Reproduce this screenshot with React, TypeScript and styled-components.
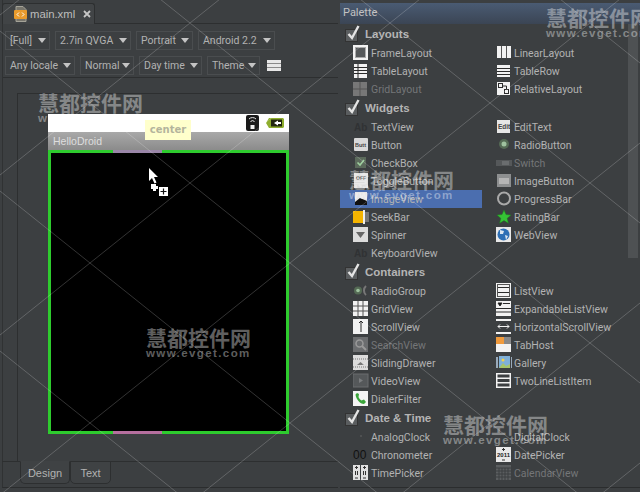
import React from "react";
import styled, { createGlobalStyle } from "styled-components";

const Global = createGlobalStyle`
  html, body { margin: 0; padding: 0; background: #3c3f41; }
  #root { width: 640px; height: 492px; overflow: hidden; }
`;

const Page = styled.div`
  position: relative;
  width: 640px;
  height: 492px;
  display: flex;
  overflow: hidden;
  background: #3c3f41;
  color: #b2b2b2;
  font-family: Roboto, "Liberation Sans", Arial, sans-serif;
  font-size: 10.5px;
`;

const Left = styled.div`
  width: 336px;
  height: 488px;
  margin-left: 2px;
  display: flex;
  flex-direction: column;
  border-left: 1px solid #303233;
  border-bottom: 1px solid #2b2d2e;
  box-sizing: border-box;
`;

const TabStrip = styled.div`
  height: 24px;
  flex: none;
  margin-left: -1px;
  padding-top: 3px;
  box-sizing: border-box;
  border-bottom: 1px solid #2d2f30;
  display: flex;
`;

const FileTab = styled.div`
  width: 93px;
  height: 21px;
  box-sizing: border-box;
  border: 1px solid #2d2f30;
  border-bottom: none;
  border-radius: 3px 3px 0 0;
  background: #414446;
  display: flex;
  align-items: center;
  padding-left: 11px;
  gap: 2px;
  font-family: "Liberation Sans", Arial, sans-serif;
  font-size: 11.3px;
  color: #bdbdbd;
`;

const IconBox = styled.svg`
  flex: none;
`;

const CloseIcon = styled.svg`
  margin-left: 6px;
  flex: none;
`;

const Toolbar = styled.div`
  height: 54px;
  flex: none;
  box-sizing: border-box;
  padding: 7px 2px 0 2px;
  border-bottom: 1px solid #2d2f30;
  display: flex;
  flex-direction: column;
  gap: 6px;
`;

const ToolRow = styled.div`
  display: flex;
  gap: 5px;
  align-items: center;
  height: 19px;
`;

const Combo = styled.div<{ $w: number }>`
  width: ${(p) => p.$w}px;
  height: 19px;
  box-sizing: border-box;
  border: 1px solid #4a4d4f;
  display: flex;
  align-items: center;
  justify-content: space-between;
  padding: 0 3px 0 4px;
  white-space: nowrap;
`;

const Arrow = styled.span`
  width: 0;
  height: 0;
  border-left: 4.5px solid transparent;
  border-right: 4.5px solid transparent;
  border-top: 5px solid #c4c4c4;
`;

const Stripes = styled.div`
  width: 14px;
  height: 11px;
  margin-left: 2px;
  background: repeating-linear-gradient(to bottom, #e8e8e8 0 3px, #8a8a8a 3px 4px);
`;

const Editor = styled.div`
  flex: 1;
  min-height: 0;
  padding: 15px 0 0 14px;
  display: flex;
`;

const Canvas = styled.div`
  flex: 1;
  border-left: 1px solid #2d2f30;
  border-top: 1px solid #2d2f30;
  padding: 20px 0 0 30px;
`;

const Phone = styled.div`
  width: 241px;
  display: flex;
  flex-direction: column;
`;

const StatusBar = styled.div`
  height: 18px;
  background: #ffffff;
  display: flex;
  align-items: center;
  justify-content: flex-end;
  gap: 6px;
  padding-right: 5px;
`;

const TitleBar = styled.div`
  height: 18px;
  background: linear-gradient(#a9a9a9, #8b8b8b);
  color: #dedede;
  font-family: "Liberation Sans", Arial, sans-serif;
  font-size: 10.5px;
  padding-left: 5px;
  line-height: 18px;
`;

const Screen = styled.div`
  position: relative;
  height: 284px;
  box-sizing: border-box;
  background: #000;
  border: 3px solid #2ecb2e;
`;

const EdgeMark = styled.div<{ $edge: "top" | "bottom"; $c: string }>`
  position: absolute;
  left: 62px;
  width: 49px;
  height: 3px;
  ${(p) => p.$edge}: -3px;
  background: ${(p) => p.$c};
`;

const Tip = styled.div`
  position: absolute;
  left: 145px;
  top: 120px;
  width: 46px;
  height: 20px;
  background: #ffffcc;
  color: #b4b49c;
  font-weight: bold;
  font-family: "DejaVu Sans", sans-serif;
  font-size: 10px;
  line-height: 20px;
  text-align: center;
`;

const CursorWrap = styled.div`
  position: absolute;
  left: 148px;
  top: 167px;
  width: 22px;
  height: 30px;
`;

const BottomTabs = styled.div`
  height: 25px;
  flex: none;
  margin-left: -1px;
  border-top: 1px solid #2d2f30;
  padding-left: 18px;
  display: flex;
`;

const ViewTab = styled.div<{ $active?: boolean; $w: number }>`
  width: ${(p) => p.$w}px;
  height: 23px;
  box-sizing: border-box;
  margin-top: -1px;
  border: 1px solid #2d2f30;
  border-top: ${(p) => (p.$active ? "1px solid #3f4244" : "1px solid #2d2f30")};
  border-radius: 0 0 5px 5px;
  background: #3f4244;
  font-family: "Liberation Sans", Arial, sans-serif;
  font-size: 11px;
  display: flex;
  align-items: center;
  justify-content: center;
`;

const Right = styled.div`
  margin-left: 2px;
  width: 300px;
  height: 488px;
  box-sizing: border-box;
  display: flex;
  flex-direction: column;
  border-bottom: 1px solid #2b2d2e;
  overflow: hidden;
`;

const PaletteHead = styled.div`
  flex: none;
  box-sizing: border-box;
  margin-top: 3px;
  height: 21px;
  padding-left: 3px;
  line-height: 20px;
  font-size: 11px;
  background: linear-gradient(#4a5b73, #3b4554);
  color: #c2c2c2;
`;

const PaletteBody = styled.div`
  flex: 1;
  min-height: 0;
  display: flex;
`;

const List = styled.div`
  flex: 1;
  min-width: 0;
  overflow: hidden;
`;

const SectionHead = styled.div`
  height: 20px;
  display: flex;
  align-items: center;
  padding-left: 5px;
  gap: 7px;
  font-family: "Liberation Sans", Arial, sans-serif;
  font-weight: bold;
  font-size: 11.5px;
  color: #b4b4b4;
`;

const Check = styled.div`
  position: relative;
  width: 13px;
  height: 13px;
  margin-top: 2px;
  background: #5a5d5f;
  border: 1px solid #333;
  box-sizing: border-box;
`;

const CheckMark = styled.svg`
  position: absolute;
  left: 0;
  top: -6px;
`;

const Grid = styled.div`
  display: grid;
  grid-template-columns: 142px 1fr;
  column-gap: 14px;
`;

const Item = styled.div<{ $sel?: boolean; $off?: boolean; $col: number; $row: number }>`
  grid-column: ${(p) => p.$col};
  grid-row: ${(p) => p.$row};
  height: 18px;
  display: flex;
  align-items: center;
  gap: 2px;
  padding-left: ${(p) => (p.$col === 1 ? 13 : 0)}px;
  background: ${(p) => (p.$sel ? "#4b6eaf" : "transparent")};
  color: ${(p) => (p.$off ? "#747678" : "#b2b2b2")};
  white-space: nowrap;
`;

const Track = styled.div`
  width: 10px;
  flex: none;
  margin-right: 2px;
`;

const Thumb = styled.div`
  height: 234px;
  background: #4e5153;
`;

const Overlay = styled.svg`
  position: absolute;
  inset: 0;
  pointer-events: none;
`;

const Mark = styled.div<{ $x: number; $y: number }>`
  position: absolute;
  left: ${(p) => p.$x}px;
  top: ${(p) => p.$y}px;
  color: rgba(255, 255, 255, 0.38);
  font-weight: bold;
  pointer-events: none;
  white-space: nowrap;
`;

const MarkCn = styled.div`
  font-family: "Noto Sans CJK SC", sans-serif;
  font-size: 21px;
  line-height: 21px;
`;

const MarkEn = styled.div`
  font-family: "Liberation Sans", sans-serif;
  font-size: 11.5px;
  line-height: 10px;
  letter-spacing: 1.4px;
`;

const S = ({ children }: { children: React.ReactNode }) => (
  <IconBox width="16" height="16" viewBox="0 0 16 16">{children}</IconBox>
);

const W = "#f2f2f2";
const D = "#2b2b2b";

const icons: Record<string, React.ReactNode> = {
  frame: <><rect x="0" y="0" width="15" height="15" fill={W} /><rect x="2.5" y="2.5" width="10" height="10" fill="#55585a" stroke="#aaa" /></>,
  linear: <><rect x="1" y="1" width="14" height="12" fill={W} /><path d="M5.5 1v12M10.5 1v12" stroke="#555" /></>,
  table: <><rect x="1" y="1" width="13" height="14" fill={W} /><path d="M1 4.5h13M1 7.5h13M1 10.5h13M5 1v14" stroke={D} /></>,
  row: <><rect x="1" y="2" width="13" height="12" fill={W} /><path d="M1 5.5h13M1 8.5h13M1 11.5h13" stroke={D} /></>,
  grid: <><rect x="0" y="1" width="14" height="14" fill="#777" /><path d="M7 1v14M0 8h14" stroke="#555" /></>,
  relative: <><rect x="1" y="1" width="13" height="13" fill={W} /><rect x="2.5" y="2.5" width="4" height="4" fill="none" stroke={D} /><rect x="8.5" y="8.5" width="4" height="4" fill="none" stroke={D} /><path d="M6.5 5h4v3" fill="none" stroke={D} /></>,
  ab: <text x="1" y="12" fontSize="10" fontWeight="bold" fill="#303234" fontFamily="Liberation Sans">Ab</text>,
  edit: <><rect x="1" y="1" width="13" height="13" fill="#e6e6e6" /><text x="2" y="10" fontSize="6.5" fontWeight="bold" fill="#444" fontFamily="Liberation Sans">Edit</text></>,
  button: <><rect x="1" y="1" width="14" height="13" rx="1" fill="#d9d9d9" /><text x="2" y="10" fontSize="5.5" fontWeight="bold" fill="#444" fontFamily="Liberation Sans">Butt</text></>,
  radio: <><circle cx="8" cy="7" r="5" fill="#556b55" /><circle cx="8" cy="7" r="2.5" fill="#9fc29f" /></>,
  check: <><rect x="2" y="2" width="11" height="11" fill="#5b6a5b" /><path d="M4.5 7.5l2.5 2.5 4-5" fill="none" stroke="#9fd19f" strokeWidth="1.6" /></>,
  sw: <><rect x="0" y="5" width="16" height="6" fill="#55585a" /><rect x="6" y="6" width="7" height="4" fill="#6a6d6f" /></>,
  toggle: <><rect x="1" y="0" width="14" height="15" fill="#dcdcdc" /><text x="3" y="7" fontSize="5" fontWeight="bold" fill="#444" fontFamily="Liberation Sans">OFF</text></>,
  imgbtn: <><rect x="1" y="1" width="14" height="13" fill="#8d8f90" /><rect x="3" y="5" width="10" height="6" fill="#b5b5b5" /></>,
  image: <><rect x="2" y="1" width="12" height="13" fill="#e6e6e6" /><path d="M2 11l5-4 7 3v4H2z" fill="#111" /></>,
  progress: <circle cx="8" cy="7.5" r="6" fill="none" stroke="#a9a9a9" strokeWidth="2" />,
  seek: <><rect x="0" y="2" width="10" height="12" fill="#f5b400" /><rect x="10" y="1" width="2" height="14" fill="#eee" /><rect x="12" y="3" width="4" height="10" fill="#777" /></>,
  rating: <path d="M8 1l2 4.6 5 .5-3.8 3.2 1.2 5L8 11.6l-4.4 2.7 1.2-5L1 6.1l5-.5z" fill="#35c335" stroke="#1c7d1c" strokeWidth=".5" />,
  spinner: <><rect x="0" y="0" width="15" height="15" fill="#dcdcdc" /><path d="M3 5h9l-4.5 6z" fill="#666" /></>,
  web: <><rect x="0" y="0" width="15" height="15" fill="#e8e8e8" /><circle cx="7.5" cy="7.5" r="6" fill="#2d6fb5" /><path d="M4 3l4 1-1 3-3 0zM9 8l3 1-2 4z" fill="#dbe6f0" /></>,
  group: <><circle cx="5" cy="7.5" r="4" fill="#556b55" /><circle cx="5" cy="7.5" r="1.8" fill="#9fc29f" /><path d="M13 3a6 6 0 0 0 0 9" fill="none" stroke="#777" strokeWidth="2" /></>,
  list: <><rect x="0" y="0" width="15" height="15" fill={W} /><path d="M1 4.5h13M1 9.5h13" stroke={D} /><rect x="1.5" y="1.5" width="12" height="12" fill="none" stroke="#555" /></>,
  gridv: <><rect x="0" y="0" width="15" height="15" fill={W} /><path d="M5 0v15M10 0v15M0 5h15M0 10h15" stroke="#555" /></>,
  exp: <><rect x="0" y="0" width="15" height="15" fill={W} /><path d="M2 2h4l-2 3zM7 2.5h7M0 7.5h15M0 11h15" stroke={D} /></>,
  scroll: <><rect x="0" y="0" width="15" height="15" fill={W} /><path d="M8 13V2M6 4l2-2 2 2" fill="none" stroke={D} /></>,
  hscroll: <><rect x="0" y="0" width="15" height="15" fill="#3c3f41" /><rect x="0" y="0" width="15" height="2" fill={W} /><rect x="0" y="13" width="15" height="2" fill={W} /><path d="M2 7.5h11M4 5.5l-2 2 2 2M11 5.5l2 2-2 2" fill="none" stroke={W} /></>,
  search: <><rect x="0" y="0" width="15" height="15" fill="#6b6d6f" /><circle cx="6.5" cy="6.5" r="3.5" fill="none" stroke="#999" strokeWidth="1.5" /><path d="M9 9l4 4" stroke="#999" strokeWidth="2" /></>,
  tab: <><rect x="0" y="0" width="15" height="15" fill={W} /><rect x="0" y="0" width="8" height="7" fill="#f09a3c" /><rect x="8" y="0" width="7" height="7" fill="#888" /></>,
  drawer: <><rect x="0" y="0" width="15" height="15" fill="#dcdcdc" /><path d="M0 4h15M0 12h15" stroke="#777" strokeDasharray="1 1" /><path d="M4 10l3.5-3 3.5 3z" fill="#777" /></>,
  gallery: <><rect x="0" y="2" width="2" height="11" fill="#9ab" /><rect x="3" y="1" width="11" height="12" fill="#7fb0d8" /><path d="M3 13l4-5 3 3 4-2v4z" fill="#a6c46a" /><circle cx="7" cy="5" r="1.5" fill="#f2d24c" /><rect x="15" y="2" width="1" height="11" fill="#9ab" /></>,
  video: <><rect x="0" y="1" width="15" height="13" fill="#55585a" stroke="#6b6d6f" /><path d="M6 5l4 2.5L6 10z" fill="#7b7d7f" /></>,
  two: <><rect x="0" y="0" width="15" height="15" fill={W} /><rect x="1.5" y="1.5" width="12" height="3" fill="#3c3f41" /><rect x="1.5" y="6" width="12" height="3" fill="#3c3f41" /><rect x="1.5" y="10.5" width="12" height="3" fill="#3c3f41" /></>,
  dialer: <><rect x="0" y="0" width="15" height="15" fill="#f4f4f4" /><path d="M4 2l2 1-.5 3c.6 1.5 1.5 2.5 3 3.5l2.5-1 2 2.5-2 2c-4 0-8-5-8.5-9.5z" fill="#3aa53a" /></>,
  analog: <circle cx="8" cy="7" r=".8" fill="#666" />,
  digital: <></>,
  chrono: <text x="0" y="12" fontSize="12" fill="#111" fontFamily="Liberation Sans">00</text>,
  date: <><rect x="0" y="0" width="15" height="15" fill="#e8e8e8" /><text x="1" y="10" fontSize="6" fontWeight="bold" fill="#222" fontFamily="Liberation Sans">2011</text><path d="M7.5 1v3M6 2.5h3M6 13h3" stroke="#333" /></>,
  time: <><rect x="0" y="0" width="7" height="15" fill="#e0e0e0" /><rect x="8" y="0" width="7" height="15" fill="#e0e0e0" /><path d="M3.5 1v3M2 2.5h3M11.5 1v3M10 2.5h3M2 13h3M10 13h3M2.5 6v4M4.5 6v4M10.5 6v4M12.5 6v4" stroke="#333" /></>,
  cal: <><rect x="0" y="0" width="15" height="15" fill="#5b5e60" /><path d="M0 3h15M0 6h15M0 9h15M0 12h15M3 3v12M6 3v12M9 3v12M12 3v12" stroke="#3c3f41" /></>,
};

type Row = [string, string, boolean?];
type Section = { title: string; left: Row[]; right: Row[] };

const sections: Section[] = [
  {
    title: "Layouts",
    left: [["FrameLayout", "frame"], ["TableLayout", "table"], ["GridLayout", "grid", true]],
    right: [["LinearLayout", "linear"], ["TableRow", "row"], ["RelativeLayout", "relative"]],
  },
  {
    title: "Widgets",
    left: [["TextView", "ab"], ["Button", "button"], ["CheckBox", "check"], ["ToggleButton", "toggle"], ["ImageView", "image"], ["SeekBar", "seek"], ["Spinner", "spinner"], ["KeyboardView", "ab"]],
    right: [["EditText", "edit"], ["RadioButton", "radio"], ["Switch", "sw", true], ["ImageButton", "imgbtn"], ["ProgressBar", "progress"], ["RatingBar", "rating"], ["WebView", "web"]],
  },
  {
    title: "Containers",
    left: [["RadioGroup", "group"], ["GridView", "gridv"], ["ScrollView", "scroll"], ["SearchView", "search", true], ["SlidingDrawer", "drawer"], ["VideoView", "video"], ["DialerFilter", "dialer"]],
    right: [["ListView", "list"], ["ExpandableListView", "exp"], ["HorizontalScrollView", "hscroll"], ["TabHost", "tab"], ["Gallery", "gallery"], ["TwoLineListItem", "two"]],
  },
  {
    title: "Date & Time",
    left: [["AnalogClock", "analog"], ["Chronometer", "chrono"], ["TimePicker", "time"]],
    right: [["DigitalClock", "digital"], ["DatePicker", "date"], ["CalendarView", "cal", true]],
  },
];

const topRow: [string, number][] = [["[Full]", 45], ["2.7in QVGA", 76], ["Portrait", 57], ["Android 2.2", 77]];
const secondRow: [string, number][] = [["Any locale", 70], ["Normal", 54], ["Day time", 63], ["Theme", 53]];
const marks: [number, number][] = [[38, 92], [546, 7], [349, 169], [146, 327], [443, 414]];

const lines = () => {
  const out: string[] = [];
  for (let k = -6; k <= 6; k++) {
    const c = 23 + 160 * k;
    const at = (x: number, s: number) => s * 0.8 * (x - 190) + c;
    out.push(`M0 ${at(0, 1)}L640 ${at(640, 1)}`);
    out.push(`M0 ${at(0, -1)}L640 ${at(640, -1)}`);
  }
  return out.join("");
};

const ComboBox = ({ label, w }: { label: string; w: number }) => (
  <Combo $w={w}>
    {label}
    <Arrow />
  </Combo>
);

export default function App() {
  return (
    <Page>
      <Global />
      <Left>
        <TabStrip>
          <FileTab>
            <IconBox width="14" height="16" viewBox="0 0 14 16">
              <path d="M2 0.5h7l3 3v12H2z" fill="#77756c" stroke="#a5a398" />
              <rect x="0" y="4" width="13" height="9" rx="1" fill="#e89a2c" />
              <path d="M5 6.5L3 8.5l2 2M8 6.5l2 2-2 2" fill="none" stroke="#fff" strokeWidth="1" />
            </IconBox>
            main.xml
            <CloseIcon width="8" height="8" viewBox="0 0 8 8">
              <path d="M1 1l6 6M7 1L1 7" stroke="#c6c6c6" strokeWidth="1.8" />
            </CloseIcon>
          </FileTab>
        </TabStrip>
        <Toolbar>
          <ToolRow>
            {topRow.map(([l, w]) => <ComboBox key={l} label={l} w={w} />)}
          </ToolRow>
          <ToolRow>
            {secondRow.map(([l, w]) => <ComboBox key={l} label={l} w={w} />)}
            <Stripes />
          </ToolRow>
        </Toolbar>
        <Editor>
          <Canvas>
            <Phone>
              <StatusBar>
                <svg width="14" height="16" viewBox="0 0 14 16">
                  <rect x="0" y="0" width="13" height="16" rx="2" fill="#1a1a1a" />
                  <path d="M3 4a5 5 0 0 1 7 0M4.5 6.5a3 3 0 0 1 4 0" fill="none" stroke="#eee" />
                  <rect x="4.5" y="10" width="4" height="4" fill="#eee" />
                </svg>
                <svg width="18" height="12" viewBox="0 0 18 12">
                  <path d="M0 6l3-5h14l1 1v8l-1 1H3z" fill="#8fae2e" />
                  <rect x="5" y="2.5" width="11" height="7" fill="#22260f" />
                  <path d="M8 6l4-2.5V5h3v2h-3v1.5z" fill="#fff" />
                </svg>
              </StatusBar>
              <TitleBar>HelloDroid</TitleBar>
              <Screen>
                <EdgeMark $edge="top" $c="#9a86a8" />
                <EdgeMark $edge="bottom" $c="#b56f9e" />
              </Screen>
            </Phone>
          </Canvas>
        </Editor>
        <BottomTabs>
          <ViewTab $active $w={50}>Design</ViewTab>
          <ViewTab $w={41}>Text</ViewTab>
        </BottomTabs>
      </Left>
      <Right>
        <PaletteHead>Palette</PaletteHead>
        <PaletteBody>
          <List>
            {sections.map((s) => (
              <div key={s.title}>
                <SectionHead>
                  <Check>
                    <CheckMark width="15" height="17" viewBox="0 0 15 17">
                      <path d="M2.5 10l3.5 4L12.5 2" fill="none" stroke="#e4e4e4" strokeWidth="2.4" />
                    </CheckMark>
                  </Check>
                  {s.title}
                </SectionHead>
                <Grid>
                  {s.left.map(([n, ic, off], i) => (
                    <Item key={n} $col={1} $row={i + 1} $off={off} $sel={n === "ImageView"}>
                      <S>{icons[ic]}</S>{n}
                    </Item>
                  ))}
                  {s.right.map(([n, ic, off], i) => (
                    <Item key={n} $col={2} $row={i + 1} $off={off}>
                      <S>{icons[ic]}</S>{n}
                    </Item>
                  ))}
                </Grid>
              </div>
            ))}
          </List>
          <Track><Thumb /></Track>
        </PaletteBody>
      </Right>
      <Tip>center</Tip>
      <CursorWrap>
        <svg width="22" height="30" viewBox="0 0 22 30">
          <path d="M1 1v13l3-3 2.5 5.500 2-1L6 10h4z" fill="#fff" />
          <path d="M3 17h5v2h2v3H8v2H5v-2H3z" fill="#fff" />
          <rect x="11" y="20" width="9" height="9" fill="#fff" />
          <path d="M15.5 21.5v6M12.5 24.5h6" stroke="#111" strokeWidth="1.2" />
        </svg>
      </CursorWrap>
      <Overlay width="640" height="492" viewBox="0 0 640 492">
        <path d={lines()} fill="none" stroke="rgba(255,255,255,0.2)" strokeWidth="1" />
      </Overlay>
      {marks.map(([x, y]) => (
        <Mark key={x} $x={x} $y={y}>
          <MarkCn>慧都控件网</MarkCn>
          <MarkEn>www.evget.com</MarkEn>
        </Mark>
      ))}
    </Page>
  );
}
